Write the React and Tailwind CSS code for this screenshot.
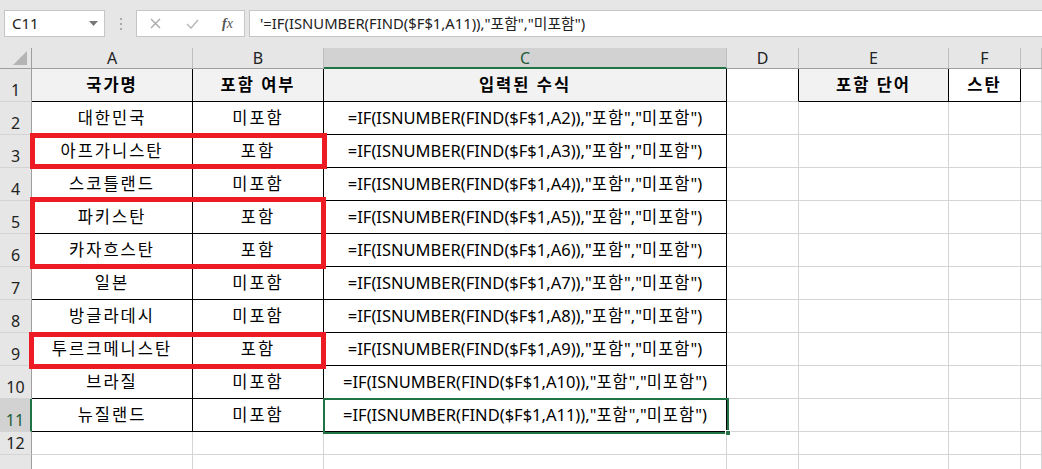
import React from 'react'

const FONT = { fontFamily: '"Noto Sans", "Noto Sans CJK KR", sans-serif' }

const COLS = ['A', 'B', 'C', 'D', 'E', 'F', '']

const DATA = [
  ['대한민국', '미포함', 'A2'],
  ['아프가니스탄', '포함', 'A3'],
  ['스코틀랜드', '미포함', 'A4'],
  ['파키스탄', '포함', 'A5'],
  ['카자흐스탄', '포함', 'A6'],
  ['일본', '미포함', 'A7'],
  ['방글라데시', '미포함', 'A8'],
  ['투르크메니스탄', '포함', 'A9'],
  ['브라질', '미포함', 'A10'],
  ['뉴질랜드', '미포함', 'A11'],
]

function Formula({ refCell, lead = '', ko = 'tracking-[1px]' }) {
  return (
    <span>
      {lead}=IF(ISNUMBER(FIND($F$1,{refCell})),"<span className={ko}>포함</span>","
      <span className={ko}>미포함</span>")
    </span>
  )
}

function RowHead({ n, active, tall = true }) {
  return (
    <div
      className={
        'flex items-end justify-center border-b border-r border-b-[#d4d4d4] pb-[3px] text-[16px] leading-none ' +
        (active
          ? 'border-r-2 border-r-[#217346] bg-[#d2d2d2] text-[#1e5c38]'
          : 'border-r-[#9e9e9e] bg-[#e6e6e6] text-[#222]') +
        (tall ? ' h-[33px]' : ' h-[23px]')
      }
    >
      {n}
    </div>
  )
}

function Cell({ children, black, right, bottom, head, bold, ko, h = 'h-[33px]' }) {
  return (
    <div
      className={
        'flex items-center justify-center whitespace-nowrap border-b border-r text-[16.5px] text-black ' +
        h +
        (bottom ? ' border-b-black' : ' border-b-[#d4d4d4]') +
        (right || black ? ' border-r-black' : ' border-r-[#d4d4d4]') +
        (head ? ' bg-[#f2f2f2]' : ' bg-white') +
        (bold ? ' font-bold' : '') +
        (ko ? ' tracking-[2px]' : '')
      }
    >
      {children}
    </div>
  )
}

function TopBar() {
  return (
    <div className="flex h-[48px] items-start bg-[#e6e6e6] pt-[10px]">
      {/* name box */}
      <div className="ml-[4px] flex h-[27px] w-[101px] items-center justify-between border border-[#c6c6c6] bg-white pl-[7px] pr-[6px]">
        <span className="text-[15px] text-[#222]">C11</span>
        <svg width="9" height="5" viewBox="0 0 9 5">
          <path d="M0 0h9L4.5 5z" fill="#777" />
        </svg>
      </div>
      <div className="flex h-[27px] w-[31px] flex-col items-center justify-center gap-[3px]">
        <span className="h-[2px] w-[2px] bg-[#aaa]" />
        <span className="h-[2px] w-[2px] bg-[#aaa]" />
        <span className="h-[2px] w-[2px] bg-[#aaa]" />
      </div>
      {/* function buttons */}
      <div className="flex h-[27px] w-[109px] items-center border border-[#c6c6c6] bg-white">
        <svg className="ml-[13px]" width="11" height="11" viewBox="0 0 11 11">
          <path d="M1 1l9 9M10 1l-9 9" stroke="#aaa" strokeWidth="1.4" />
        </svg>
        <svg className="ml-[25px]" width="13" height="10" viewBox="0 0 13 10">
          <path d="M1 5l4 4 7-8" stroke="#bbb" strokeWidth="1.6" fill="none" />
        </svg>
        <span
          className="ml-[23px] text-[14px] italic text-[#555]"
          style={{ fontFamily: '"Liberation Serif", serif' }}
        >
          <span className="font-bold">f</span>x
        </span>
      </div>
      {/* formula input */}
      <div className="ml-[4px] flex h-[27px] flex-1 items-center border border-r-0 border-[#c6c6c6] bg-white pl-[10px]">
        <span className="whitespace-nowrap text-[14.8px] text-[#222]">
          <Formula refCell="A11" lead="'" ko="" />
        </span>
      </div>
    </div>
  )
}

export default function App() {
  return (
    <div className="relative h-[469px] w-[1042px] overflow-hidden bg-white" style={FONT}>
      <TopBar />

      <div className="grid grid-cols-[32px_161px_131px_403px_72px_150px_72px_1fr]">
        {/* column header */}
        <div className="relative h-[21px] border-b border-r border-[#9e9e9e] bg-[#e6e6e6]">
          <svg className="absolute bottom-[3px] right-[4px]" width="14" height="14" viewBox="0 0 14 14">
            <path d="M14 0v14H0z" fill="#b4b4b4" />
          </svg>
        </div>
        {COLS.map((c, i) => (
          <div
            key={i}
            className={
              'flex h-[21px] items-center justify-center border-r text-[16px] leading-none ' +
              (c === 'C'
                ? 'border-b-2 border-b-[#217346] border-r-[#bdbdbd] bg-[#d2d2d2] text-[#1e5c38]'
                : 'border-b border-b-[#9e9e9e] border-r-[#bdbdbd] bg-[#e6e6e6] text-[#222]')
            }
          >
            {c}
          </div>
        ))}

        {/* row 1 */}
        <RowHead n="1" />
        <Cell head bold black bottom ko>국가명</Cell>
        <Cell head bold black bottom ko>포함 여부</Cell>
        <Cell head bold black bottom ko>입력된 수식</Cell>
        <Cell right />
        <Cell head bold black bottom ko>포함 단어</Cell>
        <Cell bold black bottom ko>스탄</Cell>
        <Cell />

        {DATA.map(([name, inc, ref], i) => (
          <React.Fragment key={ref}>
            <RowHead n={String(i + 2)} active={i === 9} />
            <Cell black bottom ko>{name}</Cell>
            <Cell black bottom ko>{inc}</Cell>
            <Cell black bottom>
              <Formula refCell={ref} />
            </Cell>
            <Cell />
            <Cell />
            <Cell />
            <Cell />
          </React.Fragment>
        ))}

        {['12', '13'].map((n) => (
          <React.Fragment key={n}>
            <RowHead n={n} tall={n !== '12'} />
            {COLS.map((c, i) => (
              <Cell key={i} h={n === '12' ? 'h-[23px]' : 'h-[33px]'} />
            ))}
          </React.Fragment>
        ))}
      </div>

      {/* red annotation boxes */}
      <div className="absolute left-[30px] top-[133px] h-[36px] w-[297px] border-[5px] border-[#ed1c24]" />
      <div className="absolute left-[30px] top-[197px] h-[72px] w-[296px] border-[5px] border-[#ed1c24]" />
      <div className="absolute left-[29px] top-[332px] h-[37px] w-[297px] border-[5px] border-[#ed1c24]" />

      {/* active cell selection */}
      <div className="absolute left-[323px] top-[398px] h-[36px] w-[406px] border-2 border-[#217346]" />
      <div className="absolute left-[725px] top-[430px] h-[6px] w-[6px] border border-white bg-[#217346]" />
    </div>
  )
}
